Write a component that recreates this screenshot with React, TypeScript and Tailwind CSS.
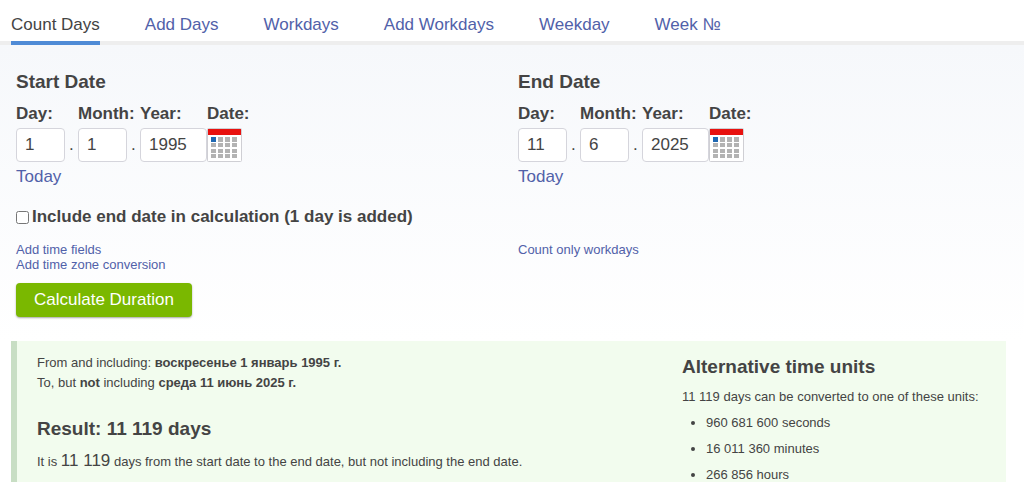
import { useState } from "react";
import clsx from "clsx";

const tabs = [
  "Count Days",
  "Add Days",
  "Workdays",
  "Add Workdays",
  "Weekday",
  "Week №",
];

const units = ["960 681 600 seconds", "16 011 360 minutes", "266 856 hours"];

function CalendarIcon() {
  return (
    <svg viewBox="0 0 35 34" className="h-[34px] w-[35px]" aria-hidden="true">
      <rect x="0.5" y="0.5" width="34" height="33" rx="1" fill="#fff" stroke="#cfcfd4" />
      <rect x="1" y="1" width="33" height="6" fill="#e8110f" />
      {[9, 15, 21, 26].map((y, row) =>
        [4, 11, 18, 25].map((x, col) => (
          <rect
            key={`${row}-${col}`}
            x={x}
            y={y}
            width="5"
            height={row === 0 ? 5 : 4}
            fill={row === 0 && col === 0 ? "#1f68b2" : "#b3b3b3"}
          />
        )),
      )}
    </svg>
  );
}

function Field({
  id,
  label,
  value,
  wide,
}: {
  id: string;
  label: string;
  value: string;
  wide?: boolean;
}) {
  const [text, setText] = useState(value);

  return (
    <div className={clsx("shrink-0", wide ? "w-[67px]" : "w-[62px]")}>
      <label htmlFor={id} className="block font-bold whitespace-nowrap">
        {label}:
      </label>
      <div className="mt-1 flex items-center">
        <input
          id={id}
          value={text}
          onChange={(e) => setText(e.target.value)}
          className={clsx(
            "h-[34px] rounded-sm border border-[#d5d5dc] bg-white pl-2 outline-none",
            wide ? "w-[67px]" : "w-[49px]",
          )}
        />
        {!wide && <span className="pl-1">.</span>}
      </div>
    </div>
  );
}

function DateGroup({
  title,
  name,
  day,
  month,
  year,
}: {
  title: string;
  name: string;
  day: string;
  month: string;
  year: string;
}) {
  return (
    <fieldset>
      <legend className="text-[19px] leading-6 font-bold">{title}</legend>
      <div className="mt-[10px] flex">
        <Field id={`${name}-day`} label="Day" value={day} />
        <Field id={`${name}-month`} label="Month" value={month} />
        <Field id={`${name}-year`} label="Year" value={year} wide />
        <div>
          <label htmlFor={`${name}-pick`} className="block font-bold">
            Date:
          </label>
          <button id={`${name}-pick`} type="button" className="mt-1 block">
            <CalendarIcon />
          </button>
        </div>
      </div>
      <a href="#today" className="mt-[5px] inline-block text-[#5161a9]">
        Today
      </a>
    </fieldset>
  );
}

export default function App() {
  const [includeEnd, setIncludeEnd] = useState(false);

  return (
    <div
      className="flex min-h-screen flex-col bg-white font-['Liberation_Sans',Arial,sans-serif]
        text-[17px] leading-5 text-[#444]"
    >
      <nav className="flex gap-[45px] border-b-4 border-[#eeeeee] pl-[11px]">
        {tabs.map((tab, idx) => (
          <a
            key={tab}
            href="#tab"
            className={clsx(
              "-mb-1 border-b-4 pt-[15px] pb-[6px] whitespace-nowrap",
              idx === 0
                ? "border-[#4f8bd6] text-[#444]"
                : "border-transparent text-[#5161a9]",
            )}
          >
            {tab}
          </a>
        ))}
      </nav>

      <form
        onSubmit={(e) => e.preventDefault()}
        className="bg-linear-to-b from-[#f6f8fb] to-white pt-[25px] pr-1 pb-6 pl-4"
      >
        <div className="grid grid-cols-2">
          <DateGroup title="Start Date" name="start" day="1" month="1" year="1995" />
          <DateGroup title="End Date" name="end" day="11" month="6" year="2025" />
        </div>

        <div className="mt-5 flex items-center gap-[3px]">
          <input
            id="include-end"
            type="checkbox"
            checked={includeEnd}
            onChange={(e) => setIncludeEnd(e.target.checked)}
            className="size-[13px]"
          />
          <label htmlFor="include-end" className="font-bold">
            Include end date in calculation (1 day is added)
          </label>
        </div>

        <div className="mt-[15px] grid grid-cols-2 text-[13px] leading-[15px] text-[#5161a9]">
          <div className="flex flex-col items-start">
            <a href="#time">Add time fields</a>
            <a href="#zone">Add time zone conversion</a>
          </div>
          <div>
            <a href="#workdays">Count only workdays</a>
          </div>
        </div>

        <button
          type="submit"
          className="mt-[11px] block h-[34px] rounded-sm bg-[#7ab800] px-[18px] text-white
            shadow-[0_1px_2px_rgba(0,0,0,0.35)]"
        >
          Calculate Duration
        </button>
      </form>

      <section
        className="mr-[18px] ml-[11px] flex flex-1 justify-between border-l-[6px]
          border-[#c8dec4] bg-[#f2fcee] pr-[22px] pl-5 text-[13px]"
      >
        <div className="pt-3">
          <p>
            From and including: <b>воскресенье 1 январь 1995 г.</b>
            <br />
            To, but <b>not</b> including <b>среда 11 июнь 2025 г.</b>
          </p>
          <h2 className="mt-6 text-[19px] leading-6 font-bold">
            Result: 11 119 days
          </h2>
          <p className="mt-[10px]">
            It is <span className="text-[17px]">11 119</span> days from the
            start date to the end date, but not including the end date.
          </p>
        </div>
        <div className="w-[302px] pt-[14px]">
          <h2 className="text-[19px] leading-6 font-bold">
            Alternative time units
          </h2>
          <p className="mt-2">11 119 days can be converted to one of these units:</p>
          <ul className="mt-2 flex list-disc flex-col gap-[10px] pl-6 leading-4">
            {units.map((unit) => (
              <li key={unit}>{unit}</li>
            ))}
          </ul>
        </div>
      </section>
    </div>
  );
}
